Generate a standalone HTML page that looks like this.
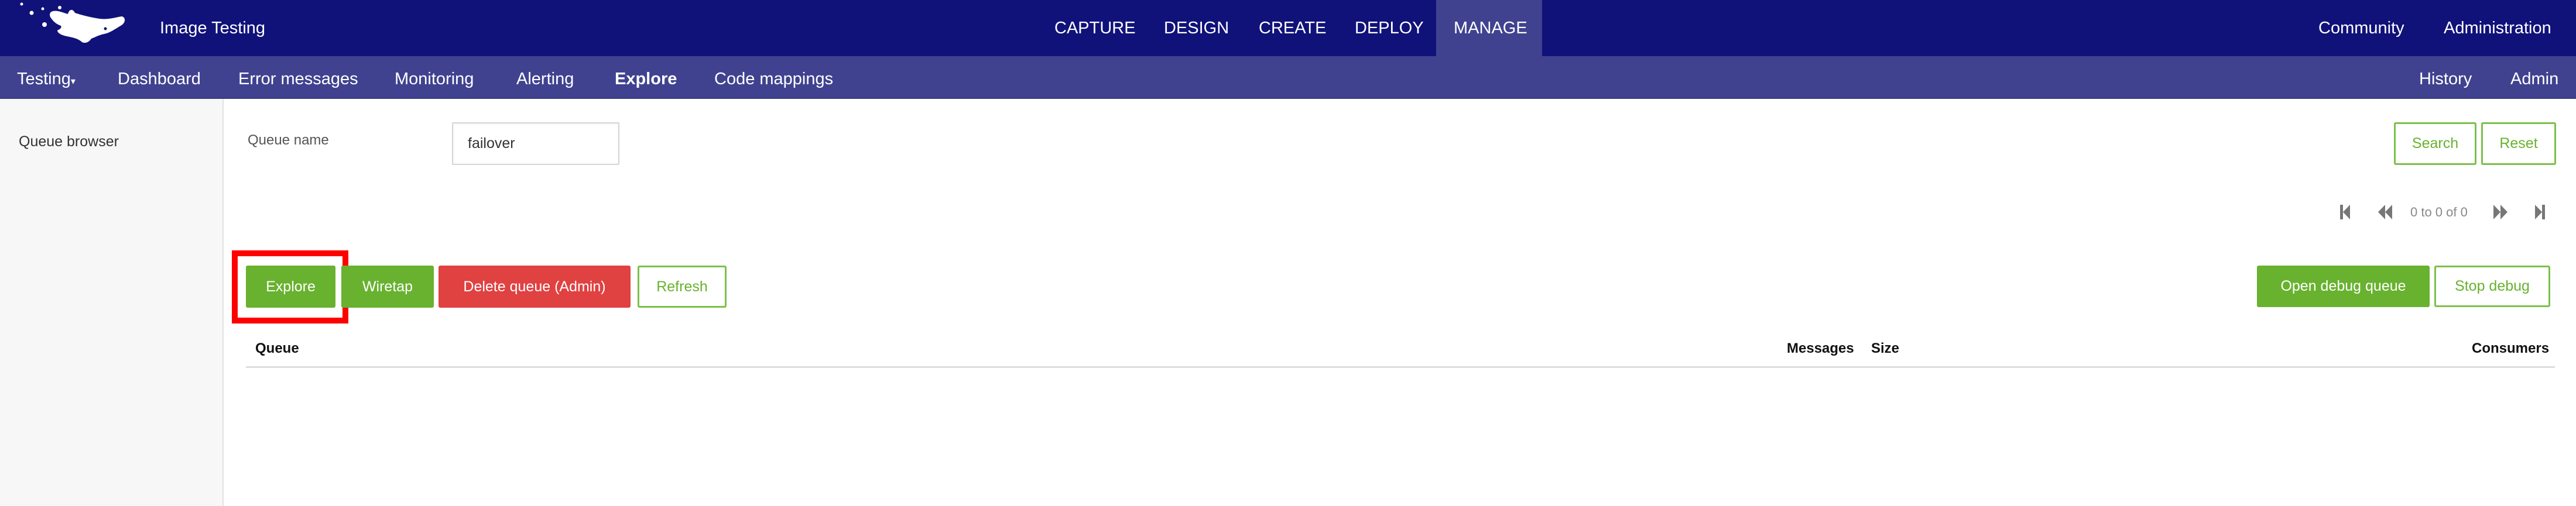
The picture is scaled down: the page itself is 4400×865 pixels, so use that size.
<!DOCTYPE html>
<html><head><meta charset="utf-8"><style>
*{margin:0;padding:0;box-sizing:border-box}
body{width:4400px;height:865px;position:relative;background:#fff;font-family:"Liberation Sans",sans-serif;overflow:hidden}
.a{position:absolute;white-space:nowrap}
.top{left:0;top:0;width:4400px;height:96px;background:#10127a}
.sub{left:0;top:96px;width:4400px;height:73px;background:#404290;border-bottom:2px solid #363880}
.w{color:#fff;font-size:29px;line-height:30px}
.tn{top:33px}
.sn{top:120px;font-size:29px}
.side{left:0;top:169px;width:382px;height:696px;background:#f7f7f7;border-right:2px solid #e2e2e2}
.btn{position:absolute;display:flex;align-items:center;justify-content:center;font-size:25px;border-radius:3px;white-space:nowrap}
.g{background:#68b22f;color:#fff}
.o{background:#fff;border:3px solid #7cc04a;color:#68b22f}
.h{font-weight:bold;font-size:24px;color:#111;top:582px}
</style></head><body>
<div class="a top"></div>
<div class="a" style="left:2453px;top:0;width:181px;height:96px;background:#404290"></div>
<div class="a sub"></div>
<svg class="a" style="left:0;top:0" width="230" height="90" viewBox="0 0 230 90">
<g fill="#fff">
<circle cx="37" cy="7" r="2.5"/><circle cx="54" cy="22" r="3.5"/><circle cx="73" cy="15" r="2.5"/><circle cx="102" cy="13" r="3"/><circle cx="76" cy="42" r="4"/>
<path d="M88 20 C96 16 108 22 116 24 C118 16 124 14 128 22 C140 26 156 30 170 32 C184 34 196 30 208 28 C216 30 214 40 206 44 C196 50 188 56 178 58 C168 60 162 64 156 66 C152 72 146 75 140 72 C134 66 124 64 114 62 C104 60 98 56 98 52 C102 50 106 48 104 44 C98 42 92 38 88 32 C84 28 84 22 88 20 Z"/>
</g><circle cx="180" cy="49" r="2.5" fill="#10127a"/></svg>
<div class="a w" style="left:273px;top:33px;font-size:29px">Image Testing</div>
<div class="a w tn" style="left:1801px">CAPTURE</div>
<div class="a w tn" style="left:1988px">DESIGN</div>
<div class="a w tn" style="left:2150px">CREATE</div>
<div class="a w tn" style="left:2314px">DEPLOY</div>
<div class="a w tn" style="left:2483px">MANAGE</div>
<div class="a w tn" style="left:3960px">Community</div>
<div class="a w tn" style="left:4174px">Administration</div>
<div class="a w sn" style="left:29px">Testing<span style="font-size:16px">▾</span></div>
<div class="a w sn" style="left:201px">Dashboard</div>
<div class="a w sn" style="left:407px">Error messages</div>
<div class="a w sn" style="left:674px">Monitoring</div>
<div class="a w sn" style="left:882px">Alerting</div>
<div class="a w sn" style="left:1050px;font-weight:bold">Explore</div>
<div class="a w sn" style="left:1220px">Code mappings</div>
<div class="a w sn" style="left:4132px">History</div>
<div class="a w sn" style="left:4288px">Admin</div>
<div class="a side"></div>
<div class="a" style="left:32px;top:228px;font-size:25px;color:#333">Queue browser</div>
<div class="a" style="left:423px;top:226px;font-size:24px;color:#555">Queue name</div>
<div class="a" style="left:772px;top:209px;width:286px;height:73px;border:2px solid #d6d6d6;border-radius:2px;box-shadow:inset 0 1px 2px rgba(0,0,0,.08)"></div>
<div class="a" style="left:799px;top:231px;font-size:25px;color:#333">failover</div>
<div class="btn o" style="left:4089px;top:209px;width:141px;height:73px">Search</div>
<div class="btn o" style="left:4238px;top:209px;width:128px;height:73px">Reset</div>
<svg class="a" style="left:3990px;top:348px" width="370" height="32" viewBox="0 0 370 32"><g fill="#777">
<rect x="7" y="2" width="5" height="25"/><path d="M24 2 L12 14.5 L24 27 Z"/>
<path d="M84 2 L72 14.5 L84 27 Z M96 2 L84 14.5 L96 27 Z"/>
<path d="M269 2 L281 14.5 L269 27 Z M281 2 L293 14.5 L281 27 Z"/>
<path d="M340 2 L352 14.5 L340 27 Z"/><rect x="352" y="2" width="5" height="25"/></g></svg>
<div class="a" style="left:4117px;top:350px;font-size:22px;color:#888">0 to 0 of 0</div>
<div class="a" style="left:396px;top:428px;width:199px;height:125px;border:10px solid #ff0000"></div>
<div class="btn g" style="left:420px;top:454px;width:153px;height:72px">Explore</div>
<div class="btn g" style="left:583px;top:454px;width:158px;height:72px">Wiretap</div>
<div class="btn" style="left:749px;top:454px;width:328px;height:72px;background:#e04141;color:#fff">Delete queue (Admin)</div>
<div class="btn o" style="left:1089px;top:454px;width:152px;height:72px">Refresh</div>
<div class="btn g" style="left:3855px;top:454px;width:295px;height:71px">Open debug queue</div>
<div class="btn o" style="left:4158px;top:454px;width:198px;height:71px">Stop debug</div>
<div class="a h" style="left:436px">Queue</div>
<div class="a h" style="left:3052px">Messages</div>
<div class="a h" style="left:3196px">Size</div>
<div class="a h" style="left:4222px">Consumers</div>
<div class="a" style="left:420px;top:626px;width:3944px;height:3px;background:#dedede"></div>
</body></html>
